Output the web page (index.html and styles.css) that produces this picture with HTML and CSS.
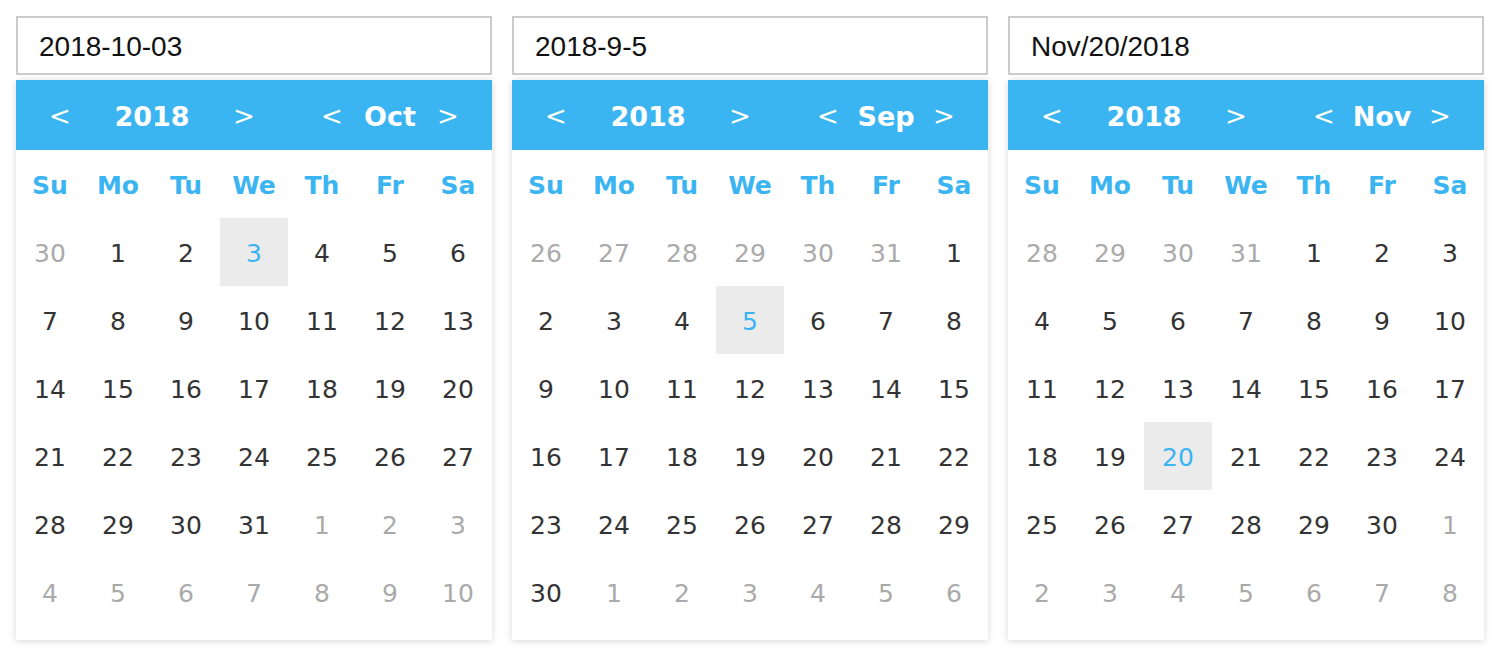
FILE: index.html
```html
<!DOCTYPE html>
<html>
<head>
<meta charset="utf-8">
<link rel="stylesheet" href="styles.css">
</head>
<body>
<div class="pickers">
  <div class="picker">
    <input class="field" type="text" value="2018-10-03" readonly>
    <div class="cal">
      <div class="cal-head">
        <div class="nav year"><span class="arrow">&lt;</span><span class="title">2018</span><span class="arrow">&gt;</span></div>
        <div class="nav month"><span class="arrow">&lt;</span><span class="title">Oct</span><span class="arrow">&gt;</span></div>
      </div>
      <div class="grid">
        <span class="wd">Su</span><span class="wd">Mo</span><span class="wd">Tu</span><span class="wd">We</span><span class="wd">Th</span><span class="wd">Fr</span><span class="wd">Sa</span>
        <span class="d o">30</span><span class="d">1</span><span class="d">2</span><span class="d sel">3</span><span class="d">4</span><span class="d">5</span><span class="d">6</span>
        <span class="d">7</span><span class="d">8</span><span class="d">9</span><span class="d">10</span><span class="d">11</span><span class="d">12</span><span class="d">13</span>
        <span class="d">14</span><span class="d">15</span><span class="d">16</span><span class="d">17</span><span class="d">18</span><span class="d">19</span><span class="d">20</span>
        <span class="d">21</span><span class="d">22</span><span class="d">23</span><span class="d">24</span><span class="d">25</span><span class="d">26</span><span class="d">27</span>
        <span class="d">28</span><span class="d">29</span><span class="d">30</span><span class="d">31</span><span class="d o">1</span><span class="d o">2</span><span class="d o">3</span>
        <span class="d o">4</span><span class="d o">5</span><span class="d o">6</span><span class="d o">7</span><span class="d o">8</span><span class="d o">9</span><span class="d o">10</span>
      </div>
    </div>
  </div>
  <div class="picker">
    <input class="field" type="text" value="2018-9-5" readonly>
    <div class="cal">
      <div class="cal-head">
        <div class="nav year"><span class="arrow">&lt;</span><span class="title">2018</span><span class="arrow">&gt;</span></div>
        <div class="nav month"><span class="arrow">&lt;</span><span class="title">Sep</span><span class="arrow">&gt;</span></div>
      </div>
      <div class="grid">
        <span class="wd">Su</span><span class="wd">Mo</span><span class="wd">Tu</span><span class="wd">We</span><span class="wd">Th</span><span class="wd">Fr</span><span class="wd">Sa</span>
        <span class="d o">26</span><span class="d o">27</span><span class="d o">28</span><span class="d o">29</span><span class="d o">30</span><span class="d o">31</span><span class="d">1</span>
        <span class="d">2</span><span class="d">3</span><span class="d">4</span><span class="d sel">5</span><span class="d">6</span><span class="d">7</span><span class="d">8</span>
        <span class="d">9</span><span class="d">10</span><span class="d">11</span><span class="d">12</span><span class="d">13</span><span class="d">14</span><span class="d">15</span>
        <span class="d">16</span><span class="d">17</span><span class="d">18</span><span class="d">19</span><span class="d">20</span><span class="d">21</span><span class="d">22</span>
        <span class="d">23</span><span class="d">24</span><span class="d">25</span><span class="d">26</span><span class="d">27</span><span class="d">28</span><span class="d">29</span>
        <span class="d">30</span><span class="d o">1</span><span class="d o">2</span><span class="d o">3</span><span class="d o">4</span><span class="d o">5</span><span class="d o">6</span>
      </div>
    </div>
  </div>
  <div class="picker">
    <input class="field" type="text" value="Nov/20/2018" readonly>
    <div class="cal">
      <div class="cal-head">
        <div class="nav year"><span class="arrow">&lt;</span><span class="title">2018</span><span class="arrow">&gt;</span></div>
        <div class="nav month"><span class="arrow">&lt;</span><span class="title">Nov</span><span class="arrow">&gt;</span></div>
      </div>
      <div class="grid">
        <span class="wd">Su</span><span class="wd">Mo</span><span class="wd">Tu</span><span class="wd">We</span><span class="wd">Th</span><span class="wd">Fr</span><span class="wd">Sa</span>
        <span class="d o">28</span><span class="d o">29</span><span class="d o">30</span><span class="d o">31</span><span class="d">1</span><span class="d">2</span><span class="d">3</span>
        <span class="d">4</span><span class="d">5</span><span class="d">6</span><span class="d">7</span><span class="d">8</span><span class="d">9</span><span class="d">10</span>
        <span class="d">11</span><span class="d">12</span><span class="d">13</span><span class="d">14</span><span class="d">15</span><span class="d">16</span><span class="d">17</span>
        <span class="d">18</span><span class="d">19</span><span class="d sel">20</span><span class="d">21</span><span class="d">22</span><span class="d">23</span><span class="d">24</span>
        <span class="d">25</span><span class="d">26</span><span class="d">27</span><span class="d">28</span><span class="d">29</span><span class="d">30</span><span class="d o">1</span>
        <span class="d o">2</span><span class="d o">3</span><span class="d o">4</span><span class="d o">5</span><span class="d o">6</span><span class="d o">7</span><span class="d o">8</span>
      </div>
    </div>
  </div>
</div>
</body>
</html>
```

FILE: styles.css
```css
html, body {
  margin: 0;
  padding: 0;
  background: #fff;
}
body {
  padding: 16px;
  font-family: "DejaVu Sans", Verdana, sans-serif;
  color: #333;
}
.pickers {
  display: flex;
  gap: 20px;
  align-items: flex-start;
}
.picker {
  width: 476px;
  display: flex;
  flex-direction: column;
}
.field {
  display: block;
  box-sizing: border-box;
  width: 476px;
  height: 59px;
  margin: 0;
  padding: 3px 0 0 21px;
  border: 2px solid #ccc;
  border-radius: 0;
  outline: none;
  background: #fff;
  font-family: "Liberation Sans", Arial, sans-serif;
  font-size: 28px;
  color: #111;
}
.cal {
  margin-top: 5px;
  background: #fff;
  box-shadow: 0 1px 7px rgba(0, 0, 0, 0.16);
  padding-bottom: 14px;
}
.cal-head {
  display: flex;
  height: 70px;
  background: #3bb4f2;
  color: #fff;
}
.nav {
  display: flex;
  align-items: center;
  padding: 2px 16px 0;
}
.year { width: 272px; box-sizing: border-box; }
.month { width: 204px; box-sizing: border-box; }
.arrow {
  width: 56px;
  text-align: center;
  font-size: 26px;
}
.title {
  flex: 1;
  text-align: center;
  font-weight: bold;
  font-size: 27px;
  white-space: nowrap;
}
.grid {
  display: grid;
  grid-template-columns: repeat(7, 68px);
  grid-auto-rows: 68px;
}
.grid span {
  display: flex;
  align-items: center;
  justify-content: center;
  padding-top: 2px;
}
.wd {
  color: #3bb4f2;
  font-weight: bold;
  font-size: 25px;
}
.d {
  font-size: 25px;
  color: #333;
}
.d.o { color: #aaa; }
.d.sel {
  background: #ebebeb;
  color: #3bb4f2;
}
```
